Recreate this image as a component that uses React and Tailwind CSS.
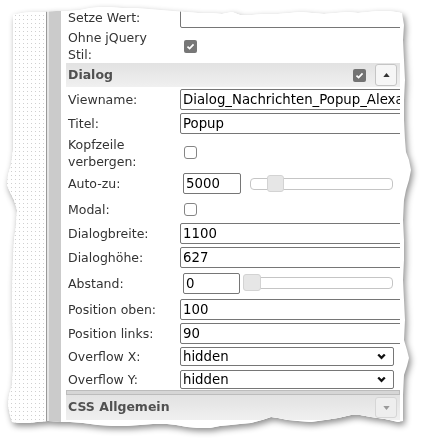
import React from "react";

// label column + value column, fixed row heights like the old table layout
function Row({ label, h = "h-[24px]", children }) {
  return (
    <div className={"flex items-center " + h}>
      <div className="w-[114px] shrink-0 pl-[2px] leading-[17px]">{label}</div>
      <div className="flex flex-1 items-center">{children}</div>
    </div>
  );
}

function TextInput({ value = "", w = "w-[232px]" }) {
  return (
    <input
      readOnly
      value={value}
      className={"h-[21px] shrink-0 rounded-[2px] border border-[#767676] bg-white px-[2px] text-[13.3px] text-black outline-none " + w}
    />
  );
}

function CheckMark() {
  return (
    <svg viewBox="0 0 10 10" className="h-[9px] w-[9px]">
      <path d="M1.6 5.2 L4 7.4 L8.4 2.6" stroke="white" strokeWidth="1.9" fill="none" />
    </svg>
  );
}

function Checked() {
  return (
    <span className="ml-[4px] flex h-[13px] w-[13px] items-center justify-center rounded-[2px] bg-[#777777]">
      <CheckMark />
    </span>
  );
}

function Unchecked() {
  return <span className="ml-[4px] block h-[13px] w-[13px] rounded-[3px] border border-[#858585] bg-white" />;
}

function Select({ value }) {
  return (
    <div className="relative">
      <select
        defaultValue={value}
        className="block h-[19px] w-[214px] appearance-none rounded-[2px] border border-[#767676] bg-white pl-[2px] text-[13.3px] leading-[17px] text-black outline-none"
      >
        <option value="hidden">hidden</option>
        <option value="visible">visible</option>
        <option value="auto">auto</option>
      </select>
      <svg viewBox="0 0 9 7" className="pointer-events-none absolute right-[8px] top-[6px] h-[7px] w-[9px]">
        <path d="M1.2 1.5 L4.5 4.8 L7.8 1.5" stroke="#111" strokeWidth="2.3" fill="none" />
      </svg>
    </div>
  );
}

function Header({ title, children }) {
  return (
    <div className="flex h-full items-center bg-linear-to-b from-[#e2e2e2] to-[#f0f0f0] pl-[2px] pr-[3px] font-bold text-[#505050]">
      <span className="flex-1">{title}</span>
      {children}
    </div>
  );
}

export default function App() {
  return (
    <div className="relative h-[439px] w-[423px] overflow-hidden bg-white font-['DejaVu_Sans',sans-serif] text-[12.5px] text-[#333]">
      <div className="[filter:drop-shadow(2px_3px_3px_rgba(0,0,0,0.45))]">
        <div className="flex h-[439px] w-[423px] bg-white [clip-path:polygon(13px_15px,22px_13px,32px_12px,44px_12px,56px_11px,68px_11px,80px_10px,90px_8px,100px_7px,110px_7px,122px_8px,135px_8px,148px_9px,160px_10px,172px_11px,185px_12px,198px_13px,210px_13px,222px_14px,232px_12px,240px_15px,252px_15px,264px_14px,278px_14px,290px_13px,300px_12px,312px_13px,324px_14px,336px_13px,348px_12px,358px_13px,368px_12px,378px_11px,388px_11px,396px_12px,402px_13px,404px_25px,403px_40px,404px_60px,405px_80px,404px_100px,404px_120px,405px_140px,406px_152px,409px_160px,411px_170px,409px_180px,406px_190px,404px_200px,403px_220px,404px_240px,404px_260px,403px_280px,404px_300px,405px_320px,404px_340px,407px_350px,409px_358px,407px_366px,404px_375px,403px_395px,403px_410px,403px_421px,398px_422px,385px_419px,371px_417px,360px_415px,351px_415px,338px_418px,325px_420px,311px_422px,298px_421px,288px_420px,278px_418px,271px_417px,262px_420px,251px_423px,240px_424px,231px_425px,220px_426px,210px_428px,198px_428px,187px_427px,176px_425px,167px_424px,153px_424px,140px_425px,126px_426px,113px_426px,98px_425px,83px_423px,70px_422px,60px_422px,48px_421px,37px_422px,28px_423px,20px_423px,12px_422px,10px_415px,8px_405px,9px_395px,12px_385px,13px_370px,13px_340px,12px_300px,13px_260px,14px_240px,16px_225px,17px_210px,14px_200px,10px_192px,7px_185px,8px_175px,11px_165px,13px_150px,13px_120px,13px_80px,13px_40px,13px_20px)]">
          {/* dotted canvas strip: single-pixel dots every 4px */}
          <div className="h-full w-[46px] shrink-0 [background-image:linear-gradient(90deg,#ffffff_3px,transparent_3px),linear-gradient(#ffffff_3px,#cfcfcf_3px)] [background-size:4px_4px]" />
          <div className="h-full w-px shrink-0 bg-[#999999]" />
          <div className="h-full w-[2px] shrink-0 bg-[#e6e6e6]" />
          <div className="h-full w-[12px] shrink-0 bg-[#cbcbcb]" />

          {/* property panel */}
          <div className="h-full w-[339px] shrink-0 overflow-hidden bg-white pl-[5px] pt-[5px]">
            <Row label="Setze Wert:">
              <TextInput />
            </Row>
            <Row label={<>Ohne jQuery<br />Stil:</>} h="h-[34px]">
              <Checked />
            </Row>
            <div className="h-[24px]">
              <Header title="Dialog">
                <span className="flex h-[13px] w-[13px] items-center justify-center rounded-[2px] bg-[#737373]">
                  <CheckMark />
                </span>
                <button className="ml-[9px] flex h-[22px] w-[22px] items-center justify-center rounded-[3px] border border-[#c5c5c5] bg-[#f6f6f6]">
                  <svg viewBox="0 0 8 5" className="h-[4px] w-[7px]">
                    <path d="M0 5 L4 0 L8 5 Z" fill="#333" />
                  </svg>
                </button>
              </Header>
            </div>
            <Row label="Viewname:">
              <TextInput value="Dialog_Nachrichten_Popup_Alexa" />
            </Row>
            <Row label="Titel:">
              <TextInput value="Popup" />
            </Row>
            <Row label={<>Kopfzeile<br />verbergen:</>} h="h-[35px]">
              <Unchecked />
            </Row>
            <Row label="Auto-zu:" h="h-[27px]">
              <span className="ml-[3px]">
                <TextInput value="5000" w="w-[58px]" />
              </span>
              <div className="relative ml-[9px] h-[12px] w-[143px] rounded-[4px] border border-[#c5c5c5] bg-white">
                <span className="absolute left-[16px] top-[-4px] h-[17px] w-[17px] rounded-[3px] border border-[#d3d3d3] bg-[#e6e6e6]" />
              </div>
            </Row>
            <Row label="Modal:">
              <Unchecked />
            </Row>
            <Row label="Dialogbreite:">
              <TextInput value="1100" />
            </Row>
            <Row label="Dialoghöhe:">
              <TextInput value="627" />
            </Row>
            <Row label="Abstand:" h="h-[28px]">
              <span className="ml-[3px]">
                <TextInput value="0" w="w-[57px]" />
              </span>
              <div className="relative ml-[3px] h-[12px] w-[150px] rounded-[4px] border border-[#c5c5c5] bg-white">
                <span className="absolute left-[-1px] top-[-4px] h-[17px] w-[18px] rounded-[3px] border border-[#d3d3d3] bg-[#e6e6e6]" />
              </div>
            </Row>
            <Row label="Position oben:">
              <TextInput value="100" />
            </Row>
            <Row label="Position links:">
              <TextInput value="90" />
            </Row>
            <Row label="Overflow X:" h="h-[23px]">
              <Select value="hidden" />
            </Row>
            <Row label="Overflow Y:" h="h-[22px]">
              <Select value="hidden" />
            </Row>
            <div className="h-[5px] border border-[#bcbcbc] bg-[#d6d6d6]" />
            <div className="h-[25px]">
              <Header title="CSS Allgemein">
                <button className="flex h-[21px] w-[22px] items-center justify-center rounded-[3px] border border-[#d6d6d6] bg-[#eeeeee]">
                  <svg viewBox="0 0 8 5" className="h-[4px] w-[7px]">
                    <path d="M0 0 L8 0 L4 5 Z" fill="#9a9a9a" />
                  </svg>
                </button>
              </Header>
            </div>
          </div>
        </div>
      </div>
    </div>
  );
}
